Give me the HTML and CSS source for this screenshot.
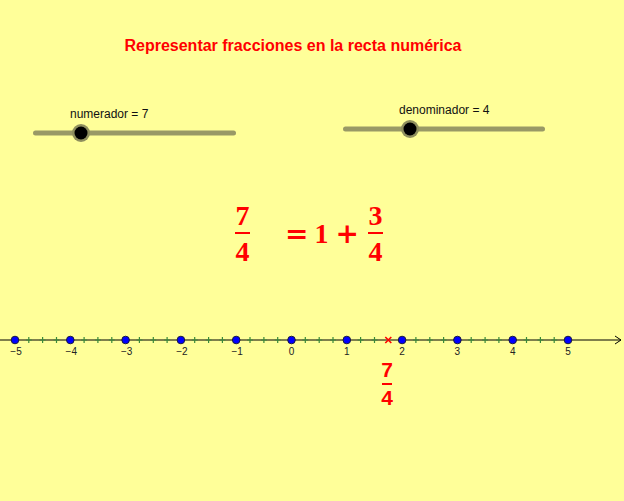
FILE: index.html
```html
<!DOCTYPE html>
<html lang="es">
<head>
<meta charset="utf-8">
<title>Representar fracciones en la recta numérica</title>
<link rel="stylesheet" href="styles.css">
</head>
<body>
<div class="stage">
  <svg class="canvas" width="624" height="501" viewBox="0 0 624 501">
    <!-- sliders -->
    <g class="slider">
      <line x1="35.5" y1="133" x2="233.5" y2="133" class="track"/>
      <circle cx="81" cy="133" r="9" class="halo"/>
      <circle cx="81" cy="133" r="6.5" class="knob"/>
      <line x1="345.5" y1="129" x2="542.5" y2="129" class="track"/>
      <circle cx="410" cy="129" r="9" class="halo"/>
      <circle cx="410" cy="129" r="6.5" class="knob"/>
    </g>
    <!-- number line -->
    <line x1="0" y1="340" x2="621" y2="340" class="axis"/>
    <path d="M615 336 L621 340 L615 344" class="axis arrow"/>
    <path class="ticks" d="M25.8 340h6M28.8 337v6 M39.6 340h6M42.6 337v6 M53.5 340h6M56.5 337v6 M81.1 340h6M84.1 337v6 M94.9 340h6M97.9 337v6 M108.8 340h6M111.8 337v6 M136.4 340h6M139.4 337v6 M150.3 340h6M153.3 337v6 M164.1 340h6M167.1 337v6 M191.7 340h6M194.7 337v6 M205.6 340h6M208.6 337v6 M219.4 340h6M222.4 337v6 M247 340h6M250 337v6 M260.9 340h6M263.9 337v6 M274.7 340h6M277.7 337v6 M302.3 340h6M305.3 337v6 M316.2 340h6M319.2 337v6 M330 340h6M333 337v6 M357.6 340h6M360.6 337v6 M371.5 340h6M374.5 337v6 M412.9 340h6M415.9 337v6 M426.8 340h6M429.8 337v6 M440.6 340h6M443.6 337v6 M468.2 340h6M471.2 337v6 M482.1 340h6M485.1 337v6 M495.9 340h6M498.9 337v6 M523.5 340h6M526.5 337v6 M537.4 340h6M540.4 337v6 M551.2 340h6M554.2 337v6"/>
    <path class="cross" d="M385.3 337 L391.3 343 M391.3 337 L385.3 343"/>
    <g class="points">
      <circle cx="15" cy="340" r="3.8"/>
      <circle cx="70.3" cy="340" r="3.8"/>
      <circle cx="125.6" cy="340" r="3.8"/>
      <circle cx="180.9" cy="340" r="3.8"/>
      <circle cx="236.2" cy="340" r="3.8"/>
      <circle cx="291.5" cy="340" r="3.8"/>
      <circle cx="346.8" cy="340" r="3.8"/>
      <circle cx="402.1" cy="340" r="3.8"/>
      <circle cx="457.4" cy="340" r="3.8"/>
      <circle cx="512.7" cy="340" r="3.8"/>
      <circle cx="568" cy="340" r="3.8"/>
    </g>
    <g class="labels">
      <text x="16" y="355">−5</text>
      <text x="71.3" y="355">−4</text>
      <text x="126.6" y="355">−3</text>
      <text x="181.9" y="355">−2</text>
      <text x="237.2" y="355">−1</text>
      <text x="291.5" y="355">0</text>
      <text x="346.8" y="355">1</text>
      <text x="402.1" y="355">2</text>
      <text x="457.4" y="355">3</text>
      <text x="512.7" y="355">4</text>
      <text x="568" y="355">5</text>
    </g>
  </svg>

  <h1 class="title">Representar fracciones en la recta numérica</h1>
  <div class="label label-num">numerador = 7</div>
  <div class="label label-den">denominador = 4</div>

  <div class="formula">
    <span class="frac big"><span class="n">7</span><span class="bar"></span><span class="n">4</span></span>
    <span class="op eq">=</span>
    <span class="n one">1</span>
    <span class="op plus">+</span>
    <span class="frac big"><span class="n">3</span><span class="bar"></span><span class="n">4</span></span>
  </div>

  <div class="frac small point-label"><span class="n">7</span><span class="bar"></span><span class="n">4</span></div>
</div>
</body>
</html>
```
FILE: styles.css
```css
html, body {
  margin: 0;
  padding: 0;
  background: #ffff99;
}
.stage {
  position: relative;
  width: 624px;
  height: 501px;
  overflow: hidden;
  background: #ffff99;
  font-family: "Liberation Sans", Arial, sans-serif;
}
.canvas {
  position: absolute;
  left: 0;
  top: 0;
}
.track {
  stroke: #999966;
  stroke-width: 5;
  stroke-linecap: round;
}
.halo {
  fill: #8f8f5e;
}
.knob {
  fill: #000;
}
.axis {
  stroke: #000;
  stroke-width: 1;
  fill: none;
}
.ticks {
  stroke: #3a8a3a;
  stroke-width: 1.2;
  fill: none;
}
.cross {
  stroke: #ff0000;
  stroke-width: 1.6;
  fill: none;
}
.points circle {
  fill: #0000ff;
  stroke: #1a1a40;
  stroke-width: 1;
}
.labels text {
  font-family: "Liberation Sans", Arial, sans-serif;
  font-size: 10px;
  fill: #222;
  text-anchor: middle;
}
.title {
  position: absolute;
  left: 0;
  top: 36px;
  width: 586px;
  margin: 0;
  text-align: center;
  color: #ff0000;
  font-size: 16px;
  font-weight: bold;
  line-height: 20px;
  font-family: "Liberation Sans", Arial, sans-serif;
}
.label {
  position: absolute;
  font-size: 12px;
  line-height: 14px;
  color: #111;
}
.label-num {
  left: 70px;
  top: 107px;
}
.label-den {
  left: 399px;
  top: 103px;
}
.formula {
  position: absolute;
  left: 235px;
  top: 203px;
  display: flex;
  align-items: center;
  color: #ff0000;
  font-family: "Liberation Serif", "Times New Roman", serif;
  font-weight: bold;
}
.frac {
  display: inline-flex;
  flex-direction: column;
  align-items: center;
}
.frac.big .n {
  font-size: 28px;
  line-height: 26px;
}
.frac.big .bar {
  width: 15px;
  height: 1.5px;
  background: #ff0000;
  margin: 3px 0 5px;
}
.op {
  font-family: "DejaVu Serif", serif;
  font-weight: bold;
  font-size: 28px;
  line-height: 30px;
}
.eq {
  margin-left: 35px;
  margin-right: 6px;
}
.one {
  font-size: 28px;
  line-height: 30px;
  margin-right: 7px;
}
.plus {
  margin-right: 9px;
}
.small {
  position: absolute;
  left: 379px;
  top: 360px;
  color: #ff0000;
  font-family: "Liberation Sans", Arial, sans-serif;
  font-weight: bold;
}
.small .n {
  font-size: 21px;
  line-height: 20px;
}
.small .bar {
  width: 10px;
  height: 1.5px;
  background: #ff0000;
  margin: 3px 0 3px;
}
.point-label {
  width: 16px;
}
```
